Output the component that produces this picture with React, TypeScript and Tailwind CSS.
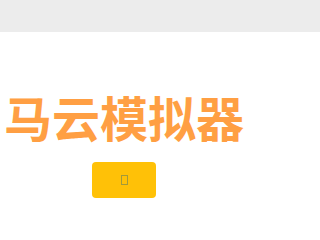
const App = () => {
  return (
    <div className="min-h-screen bg-white font-['Noto_Sans_CJK_SC',sans-serif]">
      {/* top bar */}
      <div className="h-8 bg-[#ececec]" />

      <div className="w-max px-1 pt-[52px] text-center">
        <h1 className="whitespace-nowrap text-[48px] font-bold leading-[64px] text-[#ff9f43]">
          马云模拟器
        </h1>
        <button className="mx-auto mt-[14px] flex h-9 w-16 items-center justify-center rounded bg-[#ffc107]">
          {/* missing icon glyph */}
          <span className="block h-[10px] w-[7px] border border-[#a39a3a]" />
        </button>
      </div>
    </div>
  );
};

export default App;
